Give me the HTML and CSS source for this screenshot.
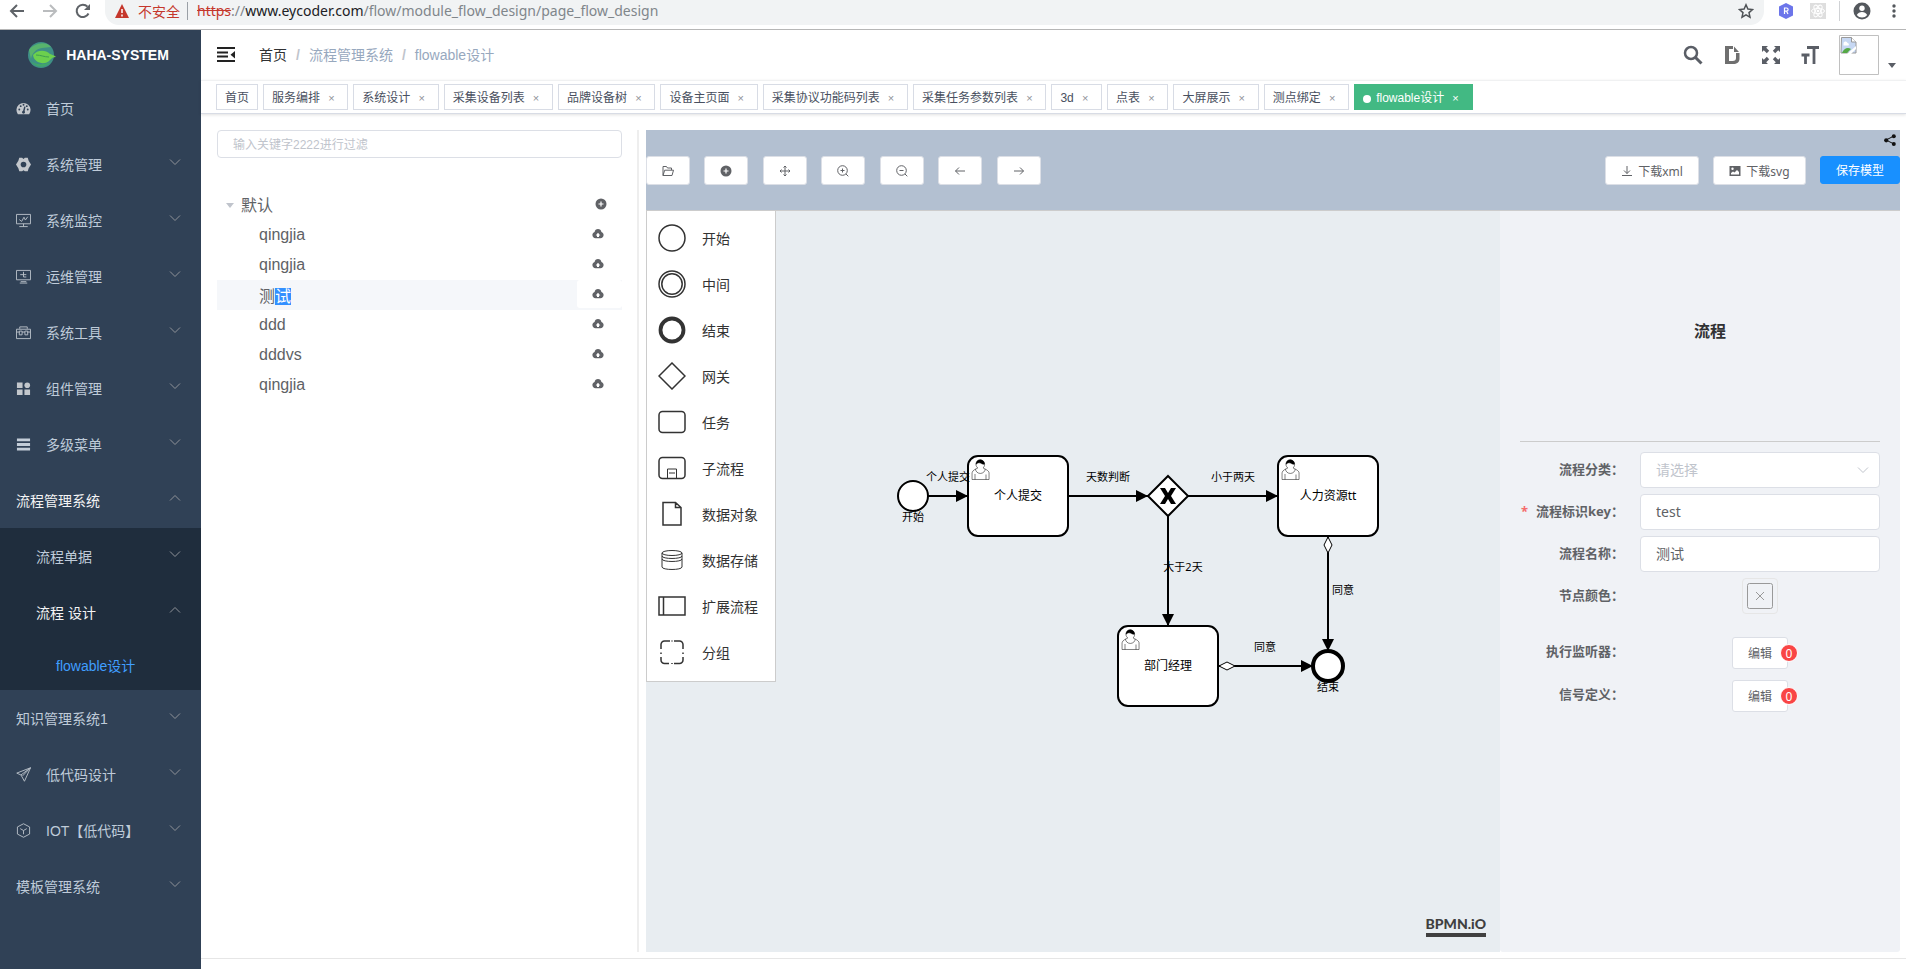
FILE: index.html
```html
<!DOCTYPE html>
<html lang="zh-CN">
<head>
<meta charset="utf-8">
<title>flowable设计</title>
<link rel="stylesheet" href="styles.css">
</head>
<body>
<svg class="defs" aria-hidden="true">
  <symbol id="down" viewBox="0 0 12 12"><path d="M1 3.500l5 5 5-5" fill="none" stroke="currentColor"/></symbol>
  <symbol id="up" viewBox="0 0 12 12"><path d="M1 8.500l5-5 5 5" fill="none" stroke="currentColor"/></symbol>
  <symbol id="cloud" viewBox="0 0 12 12"><path fill="currentColor" fill-rule="evenodd" d="M6 1C4.200 1 2.800 2.300 2.600 4 1.200 4.500.4 5.700.4 7.100.4 9 1.800 10.300 3.500 10.300h5c1.700 0 3.100-1.300 3.100-3.200 0-1.400-.8-2.600-2.200-3.100C9.200 2.300 7.800 1 6 1zM6 4.800L8.300 7.400H7V9H5V7.400H3.700z"/></symbol>
  <symbol id="plusdot" viewBox="0 0 12 12"><circle cx="6" cy="6" r="5.500" fill="currentColor"/><path d="M6 3.500v5M3.500 6h5" stroke="#fff" stroke-width="1.200"/></symbol>
  <symbol id="user" viewBox="0 0 24 28"><g stroke="#000" stroke-width=".5" fill="#fff"><path d="m15 12c.909-.845 1.594-2.049 1.594-3.385 0-2.554-1.805-4.622-4.357-4.622-2.552 0-4.288 2.068-4.288 4.622 0 1.348.974 2.562 1.896 3.405-.529.187-5.669 2.097-5.794 4.756v6.718h17v-6.718c0-2.298-5.528-4.595-6.051-4.776zm-8 6v5.500m11 0v-5"/><path d="m17.162 13.009c0 2.447-2.158 4.431-4.821 4.431-2.665 0-4.822-1.981-4.822-4.431" fill="none"/><path d="m8.100 8.200s2.251-2.358 4.274-1.177c2.024 1.181 4.221 1.537 4.124.965-.098-.57-.117-3.791-4.191-4.136-3.572.001-4.207 3.150-4.207 4.348z" fill="#000"/></g></symbol>
</svg>

<header class="browser">
  <button class="bb" aria-label="后退"><svg class="i16" viewBox="0 0 16 16"><path d="M15 8H2M8 2L2 8l6 6" fill="none" stroke="#5f6368" stroke-width="2"/></svg></button>
  <button class="bb" aria-label="前进"><svg class="i16" viewBox="0 0 16 16"><path d="M1 8h13M8 2l6 6-6 6" fill="none" stroke="#babcbe" stroke-width="2"/></svg></button>
  <button class="bb" aria-label="刷新"><svg class="i16" viewBox="0 0 16 16"><path d="M13.500 10.500A6.200 6.200 0 1 1 12.500 3.700" fill="none" stroke="#5f6368" stroke-width="2"/><path d="M15 1v6H9z" fill="#5f6368"/></svg></button>
  <div class="address">
    <svg class="i14" viewBox="0 0 14 14"><path d="M7 0L14 14H0z" fill="#c5372c"/><path d="M7 5v4M7 10.500v2" stroke="#fff" stroke-width="1.500"/></svg>
    <span class="unsafe">不安全</span>
    <span class="url"><s>https</s>://<b>www.eycoder.com</b>/flow/module_flow_design/page_flow_design</span>
    <button class="bb star" aria-label="收藏"><svg class="i16" viewBox="0 0 16 16"><path d="M8 1.800l1.900 4.300 4.600.4-3.500 3.100 1 4.600-4-2.400-4 2.400 1-4.600L1.500 6.500l4.600-.4z" fill="none" stroke="#4f5357" stroke-width="1.500"/></svg></button>
  </div>
  <button class="ext ext-r" aria-label="扩展 R"><svg class="i16" viewBox="0 0 16 16"><path d="M8 0l7 3.500v9L8 16l-7-3.500v-9z" fill="#6c75ea"/><path d="M6.500 11V5h2a1.600 1.600 0 0 1 0 3.200h-2m2 0L10 11" fill="none" stroke="#fff" stroke-width="1.200"/></svg></button>
  <button class="ext ext-react" aria-label="React"><svg class="i16" viewBox="0 0 16 16"><path d="M0 0h16v16H0z" fill="#dedede"/><g fill="none" stroke="#fff"><ellipse cx="8" cy="8" rx="6.500" ry="2.600"/><ellipse cx="8" cy="8" rx="6.500" ry="2.600" transform="rotate(60 8 8)"/><ellipse cx="8" cy="8" rx="6.500" ry="2.600" transform="rotate(120 8 8)"/></g><circle cx="8" cy="8" r="1.300" fill="#fff"/></svg></button>
  <span class="bsep"></span>
  <button class="ext ext-user" aria-label="用户"><svg class="i18" viewBox="0 0 18 18"><circle cx="9" cy="9" r="8.500" fill="#54585d"/><circle cx="9" cy="6.300" r="2.700" fill="#fff"/><path d="M3.800 13c1-2 3-3 5.200-3s4.200 1 5.200 3A6.500 6.500 0 0 1 9 15.500 6.500 6.500 0 0 1 3.800 13z" fill="#fff"/></svg></button>
  <button class="ext ext-more" aria-label="更多"><svg class="i16" viewBox="0 0 16 16"><g fill="#54585d"><circle cx="8" cy="3" r="1.700"/><circle cx="8" cy="8" r="1.700"/><circle cx="8" cy="13" r="1.700"/></g></svg></button>
</header>

<div class="app">
  <aside class="sidebar">
    <div class="brand">
      <svg class="logo" viewBox="0 0 28 26"><ellipse cx="13" cy="13" rx="13" ry="13" fill="#3f8f86"/><path d="M1 8C5 2 17-2 23 5l-9 1C8 7 4 11 3 17z" fill="#58b36c"/><path d="M5 13c4-5 12-6 17-1 2 1 4 1 6 3-3 0-4 1-6 3-5 6-16 3-17-5z" fill="#6cd04e"/><path d="M8 13c5 0 8 2 13 2" fill="none" stroke="#3f9f50"/><path d="M2 19c6 7 15 8 21 1-6 2-13 4-21-1z" fill="#3fa66a"/></svg>
      <h1>HAHA-SYSTEM</h1>
    </div>
    <nav>
      <ul class="menu">
        <li><a href="#"><svg class="mi" viewBox="0 0 16 16"><path d="M2 14A7.500 7.500 0 1 1 14 14z" fill="#c3c7cc"/><path d="M8 12l1.500-6" stroke="#304156" stroke-width="1.500"/><g fill="#304156"><circle cx="3.500" cy="9" r="1"/><circle cx="5" cy="5.500" r="1"/><circle cx="8" cy="4" r="1"/><circle cx="11.500" cy="5.500" r="1"/><circle cx="12.500" cy="9" r="1"/><circle cx="8" cy="12" r="1.500"/></g></svg><span>首页</span></a></li>
        <li><button><svg class="mi" viewBox="0 0 16 16"><path d="M3.500.8h3L8 2 9.500.8h3L13.500 4 16 8l-2.500 4-1 3.200h-3L8 14l-1.500 1.200h-3L2.500 12 0 8l2.500-4z" fill="#c3c7cc"/><circle cx="8" cy="8" r="3" fill="#304156"/></svg><span>系统管理</span><svg class="ar"><use href="#down"/></svg></button></li>
        <li><button><svg class="mi" viewBox="0 0 16 16"><path d="M.5 1.500h15v10H.5zM8 11.500v3M3.500 14.500h9M3.500 7l2.500 2L8.500 4.500l1.500 3L12.500 4" fill="none" stroke="#b8bfc8"/></svg><span>系统监控</span><svg class="ar"><use href="#down"/></svg></button></li>
        <li><button><svg class="mi" viewBox="0 0 16 16"><path d="M.5 1.500h15v10H.5zM5 13.500h6M4 15h8M4.500 6H11M8 3v5.500h3" fill="none" stroke="#b8bfc8"/></svg><span>运维管理</span><svg class="ar"><use href="#down"/></svg></button></li>
        <li><button><svg class="mi" viewBox="0 0 16 16"><path d="M.5 4.500h15v10H.5zM4 4V2h8v2M.5 7.500H4m2.500 0h3m2.500 0h3.500M3.500 6.500h3v4h-3zM9.500 6.500h3v4h-3z" fill="none" stroke="#b8bfc8"/></svg><span>系统工具</span><svg class="ar"><use href="#down"/></svg></button></li>
        <li><button><svg class="mi" viewBox="0 0 16 16"><g fill="#c3c7cc"><path d="M1 1.500h6v6H1zM1 9h6v6H1zM9 9h6v6H9z"/><circle cx="12" cy="4.500" r="3"/></g></svg><span>组件管理</span><svg class="ar"><use href="#down"/></svg></button></li>
        <li><button><svg class="mi" viewBox="0 0 16 16"><path d="M1 1.500h14v3H1zM1 6.500h14v3H1zM1 11.500h14v3H1z" fill="#c3cdd8"/></svg><span>多级菜单</span><svg class="ar"><use href="#down"/></svg></button></li>
        <li><button class="open"><span>流程管理系统</span><svg class="ar"><use href="#up"/></svg></button>
          <ul class="sub">
            <li><button class="l2"><span>流程单据</span><svg class="ar"><use href="#down"/></svg></button></li>
            <li><button class="l2 open"><span>流程 设计</span><svg class="ar"><use href="#up"/></svg></button></li>
            <li><a class="l3" href="#">flowable设计</a></li>
          </ul>
        </li>
        <li><button><span>知识管理系统1</span><svg class="ar"><use href="#down"/></svg></button></li>
        <li><button><svg class="mi" viewBox="0 0 16 16"><path d="M15.500.8L.8 6.500l4.500 2L9 15.200zM15.500.8L5.300 8.500M7 9.500L15.500.8" fill="none" stroke="#b8bfc8"/></svg><span>低代码设计</span><svg class="ar"><use href="#down"/></svg></button></li>
        <li><button><svg class="mi" viewBox="0 0 16 16"><path d="M8 .8l6.500 3.400v7.600L8 15.200l-6.500-3.400V4.200zM4.500 6L8 8l3.500-2M8 8v4" fill="none" stroke="#b8bfc8"/></svg><span>IOT【低代码】</span><svg class="ar"><use href="#down"/></svg></button></li>
        <li><button><span>模板管理系统</span><svg class="ar"><use href="#down"/></svg></button></li>
      </ul>
    </nav>
  </aside>

  <main class="main">
    <div class="navbar">
      <button class="burger" aria-label="折叠菜单"><svg class="i18" viewBox="0 0 18 18"><path d="M0 2h18M0 6.500h11M0 10.500h11M0 15h18" stroke="#222" stroke-width="2"/><path d="M18 5v7.500L13.500 8.700z" fill="#222"/></svg></button>
      <nav class="crumbs"><a href="#">首页</a><i>/</i><span>流程管理系统</span><i>/</i><span>flowable设计</span></nav>
      <div class="tools">
        <button aria-label="搜索"><svg class="i20" viewBox="0 0 20 20"><circle cx="8" cy="8" r="6" fill="none" stroke="#5a5e66" stroke-width="2.500"/><path d="M12.500 12.500l6 6" stroke="#5a5e66" stroke-width="3"/></svg></button>
        <button aria-label="文档"><svg class="i20" viewBox="0 0 20 20"><path fill-rule="evenodd" d="M3 1h8v3H7v12h3.500c2.500 0 3.500-1 3.500-3V8h3.500v5.500c0 4-2.500 5.500-6.500 5.500H3z" fill="#6f6f6f"/><path d="M12 1.500L17 7h-5z" fill="#6f6f6f"/></svg></button>
        <button aria-label="全屏"><svg class="i20" viewBox="0 0 20 20"><g fill="#5a5e66"><path d="M1 1h6L5.200 2.800l3 3-2.400 2.400-3-3L1 7zM19 1v6l-1.800-1.800-3 3-2.400-2.400 3-3L13 1zM1 19v-6l1.800 1.800 3-3 2.400 2.400-3 3L7 19zM19 19h-6l1.800-1.800-3-3 2.400-2.400 3 3L19 13z"/></g></svg></button>
        <button aria-label="字号"><svg class="i20" viewBox="0 0 20 20"><path d="M7 2.500H19M14 2.500V19M1.500 10h8M5.500 10V19" fill="none" stroke="#5a5e66" stroke-width="2.800"/></svg></button>
        <button class="avatar" aria-label="头像"><svg viewBox="0 0 40 40"><path d="M.5.5h39v39H.5z" fill="#fff" stroke="#c0c0c0"/><path d="M2.500 2.500h10l4.500 4.500v11h-15z" fill="#c7d8f3" stroke="#999"/><path d="M12.500 2.500V7H17" fill="#fff" stroke="#999"/><path d="M4.500 9a2 2 0 0 1 4-1 1.500 1.500 0 0 1 1 2.500H4.500z" fill="#fff"/><path d="M3 18c2-5 6-6 9-4l-4 4z" fill="#55a845"/><path d="M8 19l9-8v3l-5 5z" fill="#fff"/></svg></button>
        <span class="caret"></span>
      </div>
    </div>
    <div class="tags">
      <a href="#">首页</a><a href="#">服务编排 <b>×</b></a><a href="#">系统设计 <b>×</b></a><a href="#">采集设备列表 <b>×</b></a><a href="#">品牌设备树 <b>×</b></a><a href="#">设备主页面 <b>×</b></a><a href="#">采集协议功能码列表 <b>×</b></a><a href="#">采集任务参数列表 <b>×</b></a><a href="#">3d <b>×</b></a><a href="#">点表 <b>×</b></a><a href="#">大屏展示 <b>×</b></a><a href="#">测点绑定 <b>×</b></a><a href="#" class="on">flowable设计 <b>×</b></a>
    </div>

    <div class="work">
      <section class="tree">
        <input class="filter" type="text" placeholder="输入关键字2222进行过滤" aria-label="过滤">
        <div class="root"><span class="tri"></span><span>默认</span><button aria-label="新增"><svg class="i12" viewBox="0 0 12 12"><use href="#plusdot"/></svg></button></div>
        <ul>
          <li><span>qingjia</span><button aria-label="上传"><svg class="i12"><use href="#cloud"/></svg></button></li>
          <li><span>qingjia</span><button aria-label="上传"><svg class="i12"><use href="#cloud"/></svg></button></li>
          <li class="cur"><span>测<mark>试</mark></span><button aria-label="上传"><svg class="i12"><use href="#cloud"/></svg></button></li>
          <li><span>ddd</span><button aria-label="上传"><svg class="i12"><use href="#cloud"/></svg></button></li>
          <li><span>dddvs</span><button aria-label="上传"><svg class="i12"><use href="#cloud"/></svg></button></li>
          <li><span>qingjia</span><button aria-label="上传"><svg class="i12"><use href="#cloud"/></svg></button></li>
        </ul>
      </section>

      <section class="editor">
        <div class="toolbar">
          <div class="group">
            <button class="btn" aria-label="打开"><svg class="i12" viewBox="0 0 12 12"><path d="M1 10.500v-9h3.500l1 1.500h4v2M1 10.500l1.700-5.300h8.800l-1.500 5.300z" fill="none" stroke="currentColor"/></svg></button>
            <button class="btn" aria-label="新建"><svg class="i12"><use href="#plusdot"/></svg></button>
            <button class="btn" aria-label="自适应"><svg class="i12" viewBox="0 0 12 12"><path d="M6 1v10M1 6h10M4.500 2.500L6 1l1.500 1.500M4.500 9.500L6 11l1.500-1.500M2.500 4.500L1 6l1.500 1.500M9.500 4.500L11 6 9.500 7.500" fill="none" stroke="currentColor"/></svg></button>
            <button class="btn" aria-label="放大"><svg class="i12" viewBox="0 0 12 12"><path d="M9 9l2.300 2.300M5.500 3.500v4M3.500 5.500h4" stroke="currentColor"/><circle cx="5.500" cy="5.500" r="4.800" fill="none" stroke="currentColor"/></svg></button>
            <button class="btn" aria-label="缩小"><svg class="i12" viewBox="0 0 12 12"><path d="M9 9l2.300 2.300M3.500 5.500h4" stroke="currentColor"/><circle cx="5.500" cy="5.500" r="4.800" fill="none" stroke="currentColor"/></svg></button>
            <button class="btn" aria-label="撤销"><svg class="i12" viewBox="0 0 12 12"><path d="M11 6H1.500M5 2.500L1.500 6 5 9.500" fill="none" stroke="currentColor"/></svg></button>
            <button class="btn" aria-label="重做"><svg class="i12" viewBox="0 0 12 12"><path d="M1 6h9.500M7 2.500L10.500 6 7 9.500" fill="none" stroke="currentColor"/></svg></button>
          </div>
          <div class="group">
            <button class="btn"><svg class="i12" viewBox="0 0 12 12"><path d="M6 1v7.500M3 5.500l3 3 3-3M1 10.500h10" fill="none" stroke="currentColor"/></svg><span>下载xml</span></button>
            <button class="btn"><svg class="i12" viewBox="0 0 12 12"><path fill-rule="evenodd" d="M.5 1h11v10H.5zM2 9.500h8V7L8 5 5.500 7.500 4 6.500 2 8zM3.500 2.500a1.200 1.200 0 1 0 0 2.400 1.200 1.200 0 0 0 0-2.400z" fill="currentColor"/></svg><span>下载svg</span></button>
            <button class="btn primary">保存模型</button>
          </div>
          <button class="share" aria-label="分享"><svg class="i12" viewBox="0 0 12 12"><path d="M10 2L2 6l8 4" fill="none" stroke="#111"/><g fill="#111"><circle cx="9.800" cy="2.200" r="2"/><circle cx="2.200" cy="6.300" r="2.100"/><circle cx="9.800" cy="10" r="2"/></g></svg></button>
        </div>

        <div class="stage">
          <div class="canvas">
            <ul class="palette">
              <li><svg class="i28" viewBox="0 0 28 28"><circle cx="14" cy="14" r="13" /></svg>开始</li>
              <li><svg class="i28" viewBox="0 0 28 28"><circle cx="14" cy="14" r="13"/><circle cx="14" cy="14" r="10.200"/></svg>中间</li>
              <li><svg class="i28" viewBox="0 0 28 28"><circle cx="14" cy="14" r="11.500" stroke-width="3.800"/></svg>结束</li>
              <li><svg class="i28" viewBox="0 0 28 28"><path d="M14 1l13 13-13 13L1 14z"/></svg>网关</li>
              <li><svg class="i28" viewBox="0 0 28 28"><rect x="1" y="3.500" width="26" height="21" rx="3.500"/></svg>任务</li>
              <li><svg class="i28" viewBox="0 0 28 28"><rect x="1" y="3.500" width="26" height="21" rx="3.500"/><path d="M9.500 24v-9h9v9M11 19h6" stroke-width="1"/></svg>子流程</li>
              <li><svg class="i28" viewBox="0 0 28 28"><path d="M5 2.500h12.500l5.500 5V25H5zM17.500 2.500v5H23"/></svg>数据对象</li>
              <li><svg class="i28" viewBox="0 0 28 28"><g stroke-width="1"><ellipse cx="14" cy="7" rx="10" ry="2.500"/><path d="M4 7v14c0 3.300 20 3.300 20 0V7M4 10c0 3.300 20 3.300 20 0M4 13c0 3.300 20 3.300 20 0"/></g></svg>数据存储</li>
              <li><svg class="i28" viewBox="0 0 28 28"><path d="M1 5h26v18H1zM5.500 5v18"/></svg>扩展流程</li>
              <li><svg class="i28" viewBox="0 0 28 28"><path d="M3 11V6.500a3.500 3.500 0 0 1 3.500-3.500H12M16 3h5.500A3.500 3.500 0 0 1 25 6.500V11M25 19v3a3.500 3.500 0 0 1-3.500 3.500H16M11 25.500H6.500A3.500 3.500 0 0 1 3 22v-3M3 14.500v1.500M25 14.500v1.500M14 2.500v1M14 25v1"/></svg>分组</li>
            </ul>
            <svg class="diagram" role="img" aria-label="流程图">
              <defs><marker id="arrow" viewBox="0 0 10 10" refX="10" refY="5" markerWidth="12" markerHeight="12" markerUnits="userSpaceOnUse" orient="auto"><path d="M0 0l10 5-10 5z"/></marker></defs>
              <g transform="translate(267 285)">
                <g class="flow">
                  <path d="M15 0H55"/><path d="M155 0H235"/><path d="M275 0H365"/><path d="M255 20V130"/><path d="M415 40V155"/><path d="M305 170H400"/>
                </g>
                <g class="cond"><path d="M415 41l4 8-4 8-4-8z"/><path d="M306 170l8-4 8 4-8 4z"/></g>
                <g class="node">
                  <circle r="15"/>
                  <rect x="55" y="-40" width="100" height="80" rx="10"/>
                  <path d="M255-20l20 20-20 20-20-20z"/>
                  <rect x="365" y="-40" width="100" height="80" rx="10"/>
                  <rect x="205" y="130" width="100" height="80" rx="10"/>
                  <circle cx="415" cy="170" r="15" stroke-width="4"/>
                </g>
                <path d="M247-8h5l3 5 3-5h5l-5 8 5 8h-5l-3-5-3 5h-5l5-8z"/>
                <use href="#user" x="55" y="-40" width="24" height="28"/>
                <use href="#user" x="365" y="-40" width="24" height="28"/>
                <use href="#user" x="205" y="130" width="24" height="28"/>
                <g class="name"><text x="105" y="4">个人提交</text><text x="415" y="4">人力资源tt</text><text x="255" y="174">部门经理</text></g>
                <g class="label"><text x="35" y="-15">个人提交</text><text x="0" y="25">开始</text><text x="195" y="-15">天数判断</text><text x="320" y="-15">小于两天</text><text x="270" y="75">大于2天</text><text x="430" y="98">同意</text><text x="352" y="155">同意</text><text x="415" y="195">结束</text></g>
              </g>
            </svg>
            <a class="powered" href="#">BPMN.iO</a>
          </div>

          <form class="props">
            <h2>流程</h2>
            <div class="row"><label for="cat">流程分类<i>：</i></label><div class="field sel"><select id="cat"><option>请选择</option></select><svg class="ar"><use href="#down"/></svg></div></div>
            <div class="row req"><label for="key">流程标识key<i>：</i></label><div class="field"><input id="key" type="text" value="test"></div></div>
            <div class="row"><label for="nm">流程名称<i>：</i></label><div class="field"><input id="nm" type="text" value="测试"></div></div>
            <div class="row"><label for="color">节点颜色<i>：</i></label><div class="field mid"><button id="color" type="button" class="color" aria-label="节点颜色"><svg viewBox="0 0 26 26"><rect x=".5" y=".5" width="25" height="25" rx="2" fill="none" stroke="#999"/><path d="M9 9l8 8M17 9l-8 8" stroke="#999"/></svg></button></div></div>
            <div class="row tall first"><label for="lis">执行监听器<i>：</i></label><div class="field mid"><button id="lis" type="button" class="edit">编辑<sup>0</sup></button></div></div>
            <div class="row tall"><label for="sig">信号定义<i>：</i></label><div class="field mid"><button id="sig" type="button" class="edit">编辑<sup>0</sup></button></div></div>
          </form>
        </div>
      </section>
    </div>
    <footer class="foot"></footer>
  </main>
</div>
</body>
</html>
```

FILE: styles.css
```css
*{box-sizing:border-box}
body{margin:0;height:100vh;display:flex;flex-direction:column;font:14px "Liberation Sans","Noto Sans CJK SC",sans-serif;color:#606266;background:#fff;overflow:hidden}
button,input,select{font:inherit;color:inherit;margin:0;padding:0;border:0;background:none}
a{color:inherit;text-decoration:none}
ul{list-style:none;margin:0;padding:0}
svg{display:block;flex:none}
.defs{position:absolute;width:0;height:0}
.i12{width:12px;height:12px}
.i14{width:14px;height:14px}
.i16{width:16px;height:16px}
.i18{width:18px;height:18px}
.i20{width:20px;height:20px}
.i28{width:28px;height:28px}

.browser{display:flex;align-items:flex-start;flex:none;height:30px;border-bottom:1px solid #b6b6b6;padding-left:9px}
.bb,.ext{height:22px;display:flex;align-items:center;flex:none}
.browser>.bb{margin-right:17px}
.address{flex:1;display:flex;align-items:center;height:25px;padding:0 10px 3px 10px;margin-left:-3px;border-radius:0 0 14px 14px;background:#f1f3f4;color:#80868b}
.unsafe{margin:0 7px 0 9px;color:#c5372c}
.url{flex:1;padding-left:9px;border-left:1px solid #9aa0a6;font:14px/18px "Noto Sans",sans-serif}
.url s{color:#c5372c}
.url b{font-weight:400;color:#202124}
.ext-r{margin-left:14px}
.ext-react{margin-left:16px}
.bsep{width:1px;height:20px;margin:1px 13px 0;background:#d0d2d5}
.ext-more{margin:0 4px 0 15px}

.app{flex:1;display:flex;min-height:0}
.sidebar{flex:none;width:201px;background:#304156;color:#bfcbd9}
.brand{display:flex;align-items:center;justify-content:center;gap:10px;height:50px;padding-right:4px}
.logo{width:28px;height:26px}
.brand h1{margin:0;font-size:14px;line-height:20px;color:#fff}
.menu button,.menu a{display:flex;align-items:center;width:100%;height:56px;padding:0 20px 0 16px;text-align:left}
.mi{width:15px;height:15px;margin-right:15px}
.menu .ar{width:12px;height:12px;margin-left:auto;margin-bottom:4px;color:#909399}
.menu .open{color:#f4f4f5}
.sub{background:#1f2d3d}
.menu .l2{padding-left:36px}
.menu .l3{padding-left:56px;height:50px;color:#409eff}

.main{flex:1;display:flex;flex-direction:column;min-width:0}
.navbar{display:flex;align-items:center;height:50px;padding-left:16px}
.burger{margin-right:24px}
.crumbs{display:flex;color:#97a8be;line-height:20px}
.crumbs a{color:#303133}
.crumbs i{margin:0 9px;font-style:normal;font-weight:700;color:#c0c4cc}
.tools{display:flex;align-items:center;gap:19px;margin-left:auto;padding-right:10px}
.tools .avatar svg{width:40px;height:40px}
.caret{align-self:flex-end;margin:0 0 7px -10px;border:4px solid transparent;border-top:5px solid #5a5e66;border-bottom:0}
.tags{display:flex;gap:5px;height:34px;padding:4px 15px 0;border-top:1px solid #f0f1f2;border-bottom:1px solid #d8dce5;box-shadow:0 1px 3px rgba(0,0,0,.12);font-size:12px;line-height:26px;color:#495060}
.tags a{flex:none;height:26px;margin-top:-1px;padding:0 8px;border:1px solid #d8dce5;white-space:nowrap}
.tags b{display:inline-block;width:16px;text-align:center;font-weight:400;font-size:11px;color:#909399}
.tags .on{background:#42b983;border-color:#42b983;color:#fff}
.tags .on b{color:#fff}
.tags .on::before{content:"";display:inline-block;width:8px;height:8px;margin-right:5px;border-radius:4px;background:#fff;vertical-align:-1px}

.work{flex:1;display:grid;grid-template-columns:438fr 1261fr;margin:16px 6px 6px 0;min-height:0}
.tree{padding:0 15px 0 16px;border-right:2px solid #eee;min-width:0;font-size:16px}
.filter{display:block;width:100%;height:28px;padding:1px 15px 0;border:1px solid #dcdfe6;border-radius:4px;font-size:12px}
.filter::placeholder{color:#c0c4cc;opacity:1}
.root,.tree li{display:flex;align-items:center;height:30px}
.root{margin-top:32px;padding:0 15px 2px 9px}
.tri{margin:2px 7px 0 0;border:4px solid transparent;border-top:5px solid #c0c4cc;border-bottom:0}
.root button,.tree li button{margin-left:auto}
.tree li{padding-left:42px}
.tree li button{align-self:flex-start;height:28px;padding:0 18px 0 15px;background:#fff;border-radius:3px}
.cur{background:#f5f7fa}
.tree mark{background:#3390ff;color:#fff}

.editor{display:flex;flex-direction:column;margin-left:7px;min-width:0}
.toolbar{position:relative;display:flex;justify-content:space-between;flex:none;height:80px;padding-top:26px;background:#b3c0d1}
.group{font-size:16px;height:28px}
.btn{display:inline-flex;align-items:center;justify-content:center;gap:5px;min-width:44px;height:29px;padding:0 15px;border:1px solid #dcdfe6;border-radius:3px;background:#fff;font:12px "Noto Sans","Noto Sans CJK SC",sans-serif;vertical-align:top}
.btn+.btn{margin-left:10px}
.primary{height:28px;border-color:#1890ff;background:#1890ff;color:#fff}
.share{position:absolute;top:4px;right:4px}
.stage{flex:1;display:flex;min-height:0;border-top:1px solid #ccc}
.canvas{position:relative;flex:1;background:#e8edf1;font-family:"Noto Sans","Noto Sans CJK SC",sans-serif}
.palette{position:relative;z-index:1;width:130px;padding:4px 0 6px;border:1px solid #ccc;border-top:0;background:#fff;color:#333}
.palette li{display:flex;align-items:center;gap:16px;height:46px;padding-left:11px}
.palette svg{fill:none;stroke:#333;stroke-width:1.500}
.diagram{position:absolute;top:0;left:0;width:100%;height:100%}
.flow{fill:none;stroke:#000;stroke-width:2}
.flow path{marker-end:url(#arrow)}
.cond{fill:#fff;stroke:#000}
.node{fill:#fff;stroke:#000;stroke-width:2}
.name,.label{text-anchor:middle;fill:#000}
.name{font-size:12px}
.label{font-size:11px}
.powered{position:absolute;right:14px;bottom:15px;border-bottom:4px solid #404040;font:900 14px/18px Lato,sans-serif;color:#404040}

.props{flex:none;width:400px;padding:0 20px;background:#f0f2f6;border-radius:0 0 3px 3px;font-family:"Noto Sans","Noto Sans CJK SC",sans-serif}
.props h2{display:flex;align-items:center;justify-content:center;height:231px;margin:0 0 10px;padding:8px 0 0 20px;border-bottom:1px solid #ccc;font-size:16px;color:#303133}
.row{display:flex;height:36px;margin-bottom:6px}
.row label{width:120px;padding-right:16px;text-align:right;font-size:13px;line-height:34px;font-weight:700;white-space:nowrap}
.row label i{font-style:normal;font-family:"Noto Sans CJK TC",sans-serif}
.req label::before{content:"*";margin-right:8px;color:#f56c6c}
.field{flex:1;position:relative}
.field input,.field select{width:100%;height:36px;padding:0 15px 2px;border:1px solid #dcdfe6;border-radius:4px;background:#fff;appearance:none}
.field select{color:#c0c4cc}
.sel .ar{position:absolute;right:11px;top:12px;width:12px;height:12px;color:#c0c4cc}
.mid{display:flex;justify-content:center}
.color{width:36px;height:36px;padding:4px;border:1px solid #e6e6e6;border-radius:4px}
.color svg{width:26px;height:26px}
.tall{height:32px;margin-bottom:11px}
.tall label{line-height:28px}
.first{margin-top:23px}
.edit{position:relative;width:56px;height:32px;border:1px solid #dcdfe6;border-radius:3px;background:#fff;font-size:12px}
.edit sup{position:absolute;top:6px;right:-11px;height:18px;min-width:18px;border:1px solid #fff;border-radius:9px;background:#f94545;color:#fff;font-size:12px;line-height:17px}

.foot{flex:none;height:11px;border-top:1px solid #e6e6e6}
```
